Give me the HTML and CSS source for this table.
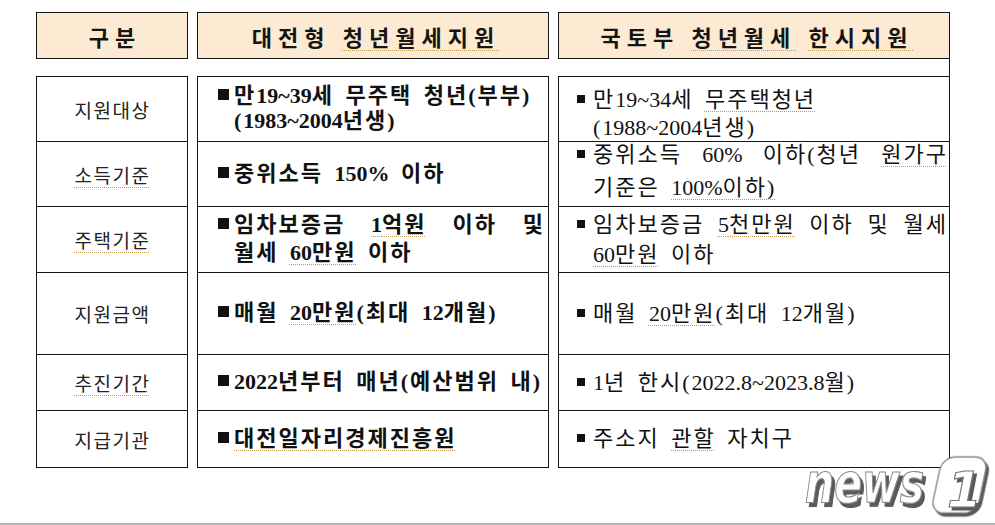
FILE: index.html
```html
<!DOCTYPE html>
<html lang="ko">
<head>
<meta charset="utf-8">
<title>청년월세지원 비교</title>
<link rel="stylesheet" href="styles.css">
</head>
<body>
<div class="page">
  <div class="tbl">
    <div class="h">구분</div>
    <div class="h"><span>대전형 <span class="sp">청년월세지원</span></span></div>
    <div class="h"><span>국토부 <span class="sp">청년월세</span> <span class="sp">한시지원</span></span></div>

    <div class="gap"></div>
    <div class="gap"></div>
    <div class="gap last"></div>

    <div class="c lab first">지원대상</div>
    <div class="c mid first">
      <p class="ln"><span class="b">■</span>만<span class="n">19~39</span>세 무주택 청년(부부)</p>
      <p class="ln ind">(<span class="n">1983~2004</span>년생)</p>
    </div>
    <div class="c rt first r1">
      <p class="ln"><span class="b">■</span>만<span class="n">19~34</span>세 <span class="sp">무주택청년</span></p>
      <p class="ln ind">(<span class="n">1988~2004</span>년생)</p>
    </div>

    <div class="c lab"><span class="sp">소득기준</span></div>
    <div class="c mid">
      <p class="ln"><span class="b">■</span>중위소득 <span class="n">150%</span> 이하</p>
    </div>
    <div class="c rt r2">
      <p class="ln j"><span class="b">■</span>중위소득 <span class="n">60%</span> 이하(청년 <span class="sp">원가구</span></p>
      <p class="ln ind">기준은 <span class="sp"><span class="n">100%</span>이하)</span></p>
    </div>

    <div class="c lab"><span class="sp">주택기준</span></div>
    <div class="c mid m3">
      <p class="ln j"><span class="b">■</span>임차보증금 <span class="sp"><span class="n">1</span>억원</span> 이하 및</p>
      <p class="ln ind">월세 <span class="sp"><span class="n">60</span>만원</span> 이하</p>
    </div>
    <div class="c rt">
      <p class="ln j"><span class="b">■</span>임차보증금 <span class="sp"><span class="n">5</span>천만원</span> 이하 및 월세</p>
      <p class="ln ind"><span class="sp"><span class="n">60</span>만원</span> 이하</p>
    </div>

    <div class="c lab">지원금액</div>
    <div class="c mid">
      <p class="ln"><span class="b">■</span>매월 <span class="sp"><span class="n">20</span>만원</span>(최대 <span class="n">12</span>개월)</p>
    </div>
    <div class="c rt">
      <p class="ln"><span class="b">■</span>매월 <span class="sp"><span class="n">20</span>만원</span>(최대 <span class="n">12</span>개월)</p>
    </div>

    <div class="c lab"><span class="sp">추진기간</span></div>
    <div class="c mid">
      <p class="ln"><span class="b">■</span><span class="n">2022</span>년부터 매년(예산범위 내)</p>
    </div>
    <div class="c rt">
      <p class="ln"><span class="b">■</span><span class="n">1</span>년 한시(<span class="n">2022.8~2023.8</span>월)</p>
    </div>

    <div class="c lab">지급기관</div>
    <div class="c mid">
      <p class="ln"><span class="b">■</span><span class="sp">대전일자리경제진흥원</span></p>
    </div>
    <div class="c rt">
      <p class="ln"><span class="b">■</span>주소지 <span class="sp">관할</span> 자치구</p>
    </div>
  </div>
  <div class="rule"></div>
</div>

<svg class="logo" width="197" height="80" viewBox="0 0 197 80" aria-label="news1">
  <defs>
    <filter id="sh" x="-10%" y="-10%" width="130%" height="140%">
      <feDropShadow dx="3" dy="3" stdDeviation="0.5" flood-color="#5a5a5a" flood-opacity="1"/>
    </filter>
  </defs>
  <g transform="translate(7 57) scale(1 1.35)" filter="url(#sh)">
    <text x="0" y="0" font-family="DejaVu Sans" font-weight="bold" font-style="italic" font-size="41" fill="#ffffff" stroke="#8a8a8a" stroke-width="0.9">news</text>
  </g>
  <g transform="skewX(-12)" filter="url(#sh)">
    <rect x="147" y="12" width="46" height="56" rx="13" fill="#ffffff" stroke="#7a7a7a" stroke-width="1.3"/>
  </g>
  <text x="149" y="62" font-family="DejaVu Sans" font-weight="bold" font-style="italic" font-size="50" fill="#ffffff" stroke="#777777" stroke-width="1.2" filter="url(#sh)">1</text>
</svg>
</body>
</html>
```

FILE: styles.css
```css
* {
  box-sizing: border-box;
  margin: 0;
  padding: 0;
}

body {
  width: 995px;
  height: 525px;
  position: relative;
  overflow: hidden;
  background: #ffffff;
  color: #111111;
}

.page {
  padding: 12px 0 0 36px;
}

.tbl {
  display: grid;
  grid-template-columns: 152px 352px 392px;
  column-gap: 9px;
  grid-template-rows: 47px 17px 66px 65px 66px 82px 56px 57px;
}

.h {
  background: #fcead2;
  border: 1px solid #151515;
  display: flex;
  align-items: center;
  justify-content: center;
  font-family: "Noto Sans CJK KR", sans-serif;
  font-weight: 700;
  font-size: 22px;
  letter-spacing: 6px;
  padding-left: 6px;
  color: #151515;
}

.gap.last {
  border-right: 1px solid #151515;
}

.c {
  border-left: 1px solid #151515;
  border-right: 1px solid #151515;
  border-bottom: 1px solid #151515;
  display: flex;
  flex-direction: column;
  justify-content: center;
}

.c.first {
  border-top: 1px solid #151515;
}

.lab {
  align-items: center;
  font-family: "Noto Sans CJK KR", sans-serif;
  font-size: 19px;
  font-weight: 400;
  letter-spacing: 1.5px;
  padding-left: 1px;
  color: #222222;
}

.mid {
  font-family: "Liberation Serif", "Noto Sans CJK KR", serif;
  font-weight: 700;
  font-size: 22px;
  line-height: 25px;
  letter-spacing: 2px;
  word-spacing: 4px;
  padding: 0 3px 2px 20px;
}

.mid.m3 {
  line-height: 28px;
}

.rt {
  font-family: "Liberation Serif", "Noto Sans CJK KR", serif;
  font-weight: 400;
  font-size: 22px;
  line-height: 30px;
  letter-spacing: 2px;
  word-spacing: 4px;
  padding: 0 1px 0 18px;
}

.rt.r1 {
  line-height: 28px;
  padding-top: 9px;
}

.rt.r2 {
  line-height: 33px;
  padding-bottom: 6px;
}

.n {
  letter-spacing: 0;
}

.ln {
  white-space: nowrap;
}

.ln.j {
  text-align: justify;
  text-align-last: justify;
  text-justify: inter-word;
}

.ln.ind {
  padding-left: 16px;
}

.rt .ln.ind {
  padding-left: 16px;
}

.b {
  display: inline-block;
  width: 11px;
  height: 11px;
  margin-right: 5px;
  background: #111111;
  color: #111111;
  font-family: "DejaVu Sans", sans-serif;
  font-size: 10px;
  line-height: 11px;
  font-weight: 400;
  letter-spacing: 0;
  word-spacing: 0;
  overflow: hidden;
  vertical-align: 3px;
}

.rt .b {
  width: 8px;
  height: 8px;
  line-height: 8px;
  font-size: 8px;
  margin-right: 8px;
  vertical-align: 4px;
}

.sp {
  text-decoration: underline dotted #c49a4a;
  text-decoration-thickness: 1px;
  text-underline-offset: 4px;
}

.rule {
  margin: 55px 0 0 -36px;
  height: 2px;
  background: #b3b3b3;
}

.logo {
  position: absolute;
  left: 798px;
  top: 445px;
}
```
